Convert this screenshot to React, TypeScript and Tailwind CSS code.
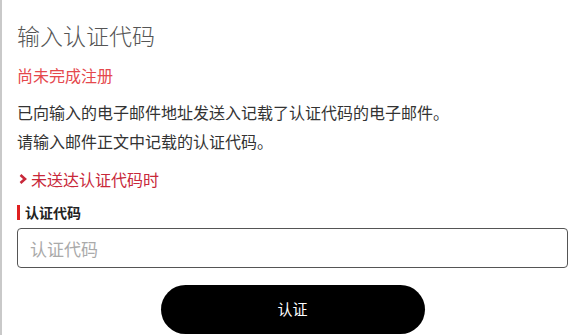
export default function App() {
  return (
    <div
      className="min-h-[335px] w-[574px] overflow-hidden bg-white border-l-2 border-[#c9c9c9] pl-[15px] pr-[6px] text-[#333]"
      style={{ fontFamily: '"Noto Sans CJK SC", "Noto Sans", sans-serif' }}
    >
      <h1 className="pt-[20px] text-[23px] leading-[30px] font-light text-[#555]">输入认证代码</h1>

      <p className="mt-[14px] text-[16px] leading-[22px] text-[#e5484d]">尚未完成注册</p>

      <div className="mt-[12px] text-[16px] leading-[29px]">
        <p>已向输入的电子邮件地址发送入记载了认证代码的电子邮件。</p>
        <p>请输入邮件正文中记载的认证代码。</p>
      </div>

      <a className="mt-[11px] flex items-center text-[16px] leading-[24px] text-[#c8283a]">
        <svg viewBox="0 0 8 10" className="ml-[2px] mr-[4px] h-[10px] w-[8px]">
          <polyline points="1.5,1 6,5 1.5,9" fill="none" stroke="#c8283a" strokeWidth="2.6" />
        </svg>
        <span>未送达认证代码时</span>
      </a>

      <label className="mt-[12px] flex items-center text-[14px] font-bold leading-[18px] text-[#222]">
        <span className="mr-[5px] h-[15px] w-[3px] bg-[#e02020]" />
        认证代码
      </label>

      <input
        placeholder="认证代码"
        className="mt-[7px] h-[40px] w-full rounded-[4px] border-[1.5px] border-[#555] px-[12px] text-[17px] outline-none placeholder:text-[#aaa]"
      />

      <div className="mt-[17px] flex justify-center">
        <button className="h-[49px] w-[264px] rounded-full bg-black text-[15px] text-white">认证</button>
      </div>
    </div>
  );
}
